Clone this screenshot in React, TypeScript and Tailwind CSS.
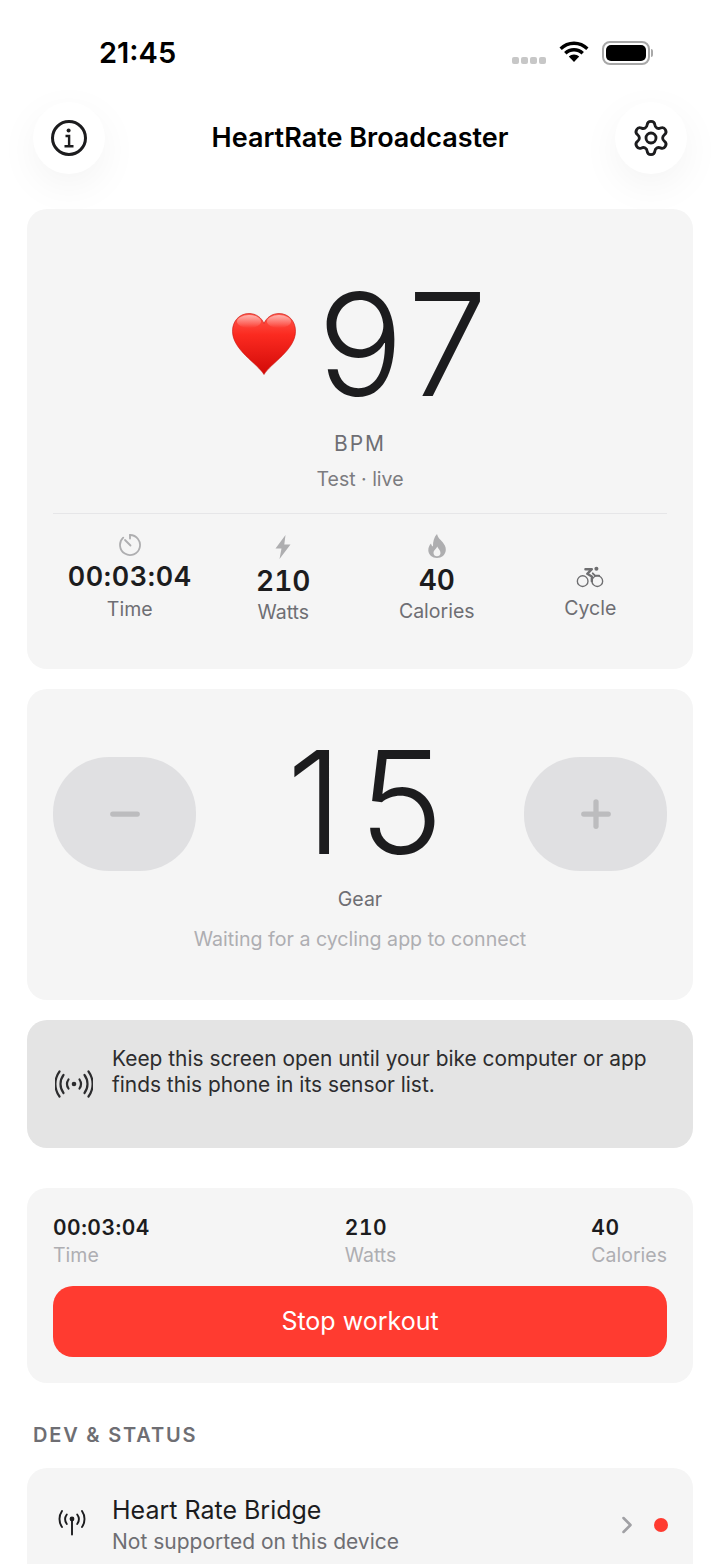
import React from "react";
import { Settings, Minus, Plus, ChevronRight } from "lucide-react";

const Info = () => (
  <svg width="38" height="38" viewBox="0 0 38 38" fill="none" stroke="#1c1c1e" strokeWidth="3" strokeLinecap="round">
    <circle cx="19" cy="19" r="16.5" />
    <circle cx="18.6" cy="11.6" r="2" fill="#1c1c1e" stroke="none" />
    <path d="M15.5 17h3.6v10M14.5 27.2h9" strokeWidth="2.4" strokeLinecap="butt" />
  </svg>
);

const Heart = () => (
  <svg width="64" height="62" viewBox="0 0 64 62" className="shrink-0">
    <defs>
      <linearGradient id="hg" x1="0" y1="0" x2="0" y2="1">
        <stop offset="0" stopColor="#ff5a4e" />
        <stop offset="0.35" stopColor="#fb2a20" />
        <stop offset="1" stopColor="#d20a08" />
      </linearGradient>
      <linearGradient id="hl" x1="0" y1="0" x2="0" y2="1">
        <stop offset="0" stopColor="#ffffff" stopOpacity="0.55" />
        <stop offset="1" stopColor="#ffffff" stopOpacity="0" />
      </linearGradient>
    </defs>
    <path d="M32 61.500C25 50 .8 37 .5 18.500.3 8 7.500 .5 17 .5 24 .5 29.500 4.500 32 10.500 34.500 4.500 40 .5 47 .5 56.500 .5 63.700 8 63.500 18.500 63.200 37 39 50 32 61.500Z" fill="url(#hg)" stroke="#c9100c" strokeWidth="0.6" />
    <ellipse cx="17" cy="8.500" rx="12" ry="6.500" fill="url(#hl)" />
    <ellipse cx="47" cy="8.500" rx="12" ry="6.500" fill="url(#hl)" />
  </svg>
);

const Timer = () => (
  <svg width="24" height="24" viewBox="0 0 24 24" fill="none" stroke="#aeaeb0" strokeWidth="1.8" strokeLinecap="round">
    <path d="M12 2a10 10 0 1 1-6.800 2.700" />
    <path d="M12 2v3.500M7 7l5.500 5.500" />
  </svg>
);

const Bolt = () => (
  <svg width="16" height="24" viewBox="0 0 16 24" fill="#aeaeb0">
    <path d="M10.500 0 .5 13.500h6L4.500 24 15.500 9.500h-6.200Z" />
  </svg>
);

const Flame = () => (
  <svg width="18" height="24" viewBox="0 0 18 24">
    <path fillRule="evenodd" fill="#aeaeb0" d="M9 0c1 4 3 5 5.500 8 2 2.500 3.500 5 3.300 8C17.500 21 13.500 24 9 24S.5 21 .3 16.500C.2 13.500 1.500 11 3 9.500c.3 1.500 1 2.500 2 3C4.800 8 6 3 9 0Zm.2 12.500c-.5 2-3.700 3.500-3.700 6.500 0 2 1.600 3.300 3.500 3.300s3.500-1.300 3.500-3.300c0-3-2.500-4.500-3.300-6.500Z" />
  </svg>
);

const Cycle = () => (
  <svg width="28" height="22" viewBox="0 0 30 24" fill="none" stroke="#6e6e70" strokeWidth="1.500" strokeLinecap="round" strokeLinejoin="round">
    <circle cx="7" cy="16.500" r="5.800" />
    <circle cx="23" cy="16.500" r="5.800" />
    <circle cx="22" cy="3" r="2.200" fill="#6e6e70" stroke="none" />
    <path d="M10 3.500h7l-5 5 5 3v5" strokeWidth="2.600" />
    <path d="M18 8l2.500 2.500H25" strokeWidth="2" />
  </svg>
);

const Waves = () => (
  <svg width="38" height="28" viewBox="0 0 38 28" fill="none" stroke="#2c2c2e" strokeWidth="2.200" strokeLinecap="round" className="shrink-0">
    <circle cx="19" cy="14" r="2.300" fill="#2c2c2e" stroke="none" />
    <path d="M13.500 9.500a8 8 0 0 0 0 9M24.500 9.500a8 8 0 0 1 0 9" />
    <path d="M8.500 5a15 15 0 0 0 0 18M29.500 5a15 15 0 0 1 0 18" />
    <path d="M4.500 1.500a21 21 0 0 0 0 25M33.500 1.500a21 21 0 0 1 0 25" />
  </svg>
);

const Antenna = () => (
  <svg width="30" height="26" viewBox="0 0 30 26" fill="none" stroke="#1c1c1e" strokeWidth="1.900" strokeLinecap="round">
    <circle cx="15" cy="9" r="2.400" fill="#1c1c1e" stroke="none" />
    <path d="M15 10v14.500" />
    <path d="M9.800 4.500a8 8 0 0 0 0 9.500M20.200 4.500a8 8 0 0 1 0 9.500" />
    <path d="M5 1a14 14 0 0 0 0 16M25 1a14 14 0 0 1 0 16" />
  </svg>
);

const Wifi = () => (
  <svg width="32" height="24" viewBox="0 0 32 24" fill="#000">
    <path d="M16 4c4.700 0 9 1.900 12.200 5l2.300-2.500C26.700 2.800 21.600.5 16 .5S5.300 2.800 1.500 6.500L3.800 9C7 5.900 11.300 4 16 4Z" />
    <path d="M16 10.500c2.900 0 5.500 1.100 7.500 3l2.400-2.600C23.300 8.500 19.800 7 16 7S8.700 8.500 6.100 10.900l2.400 2.600c2-1.900 4.600-3 7.500-3Z" />
    <path d="M16 13.500c-2 0-3.800.8-5.200 2L16 21l5.200-5.500c-1.400-1.200-3.200-2-5.200-2Z" />
  </svg>
);

const Battery = () => (
  <div className="flex items-center gap-[1px]">
    <div className="w-[48px] h-[24px] rounded-[8px] border-2 border-[#a8a8a8] p-[2px]">
      <div className="w-full h-full rounded-[5px] bg-black" />
    </div>
    <div className="w-[2px] h-[8px] rounded-r bg-[#a8a8a8]" />
  </div>
);

const Stat = ({ icon, value, label, small, className }: { icon: React.ReactNode; value?: string; label: string; small?: boolean; className?: string }) => (
  <div className={`flex flex-col items-center ${className ?? ""}`}>
    <div className="h-[24px] flex items-center">{icon}</div>
    {value && (
      <div className={`${small ? "text-[27px] leading-[34px] tracking-[0.6px] mt-[3px]" : "text-[28px] leading-[36px] mt-[4px]"} font-semibold text-[#1c1c1e] tabular-nums`}>{value}</div>
    )}
    <div className={`text-[19.5px] leading-[24px] text-[#6e6e73] ${small ? "mt-[3px]" : value ? "mt-[1px]" : "mt-[7px]"}`}>{label}</div>
  </div>
);

const Mini = ({ value, label }: { value: string; label: string }) => (
  <div className="flex flex-col">
    <div className="text-[21px] leading-[26px] tracking-[0.5px] font-semibold text-[#1c1c1e] tabular-nums">{value}</div>
    <div className="text-[19.5px] leading-[26px] mt-[1px] text-[#aeaeb2]">{label}</div>
  </div>
);

const Stepper = ({ children }: { children: React.ReactNode }) => (
  <div className="w-[143px] h-[114px] rounded-[56px] bg-[#e0e0e2] flex items-center justify-center text-[#bcbcbe]">{children}</div>
);

export default function App() {
  return (
    <div className="w-[720px] h-[1564px] overflow-hidden bg-white text-[#1c1c1e] font-['Inter',sans-serif]">
      <div className="h-[102px] flex items-start justify-between pl-[99px] pr-[67px] pt-[35px]">
        <div className="text-[29px] leading-[36px] font-semibold text-black">21:45</div>
        <div className="flex items-center gap-[12px] pt-[6px]">
          <div className="flex gap-[2px] items-center mt-[14px]">
            <span className="w-[7px] h-[7px] rounded-[2px] bg-[#c7c7c7]" />
            <span className="w-[7px] h-[7px] rounded-[2px] bg-[#c7c7c7]" />
            <span className="w-[7px] h-[7px] rounded-[2px] bg-[#c7c7c7]" />
            <span className="w-[7px] h-[7px] rounded-[2px] bg-[#c7c7c7]" />
          </div>
          <Wifi />
          <Battery />
        </div>
      </div>

      <div className="flex items-center justify-between px-[33px] h-[72px]">
        <div className="w-[72px] h-[72px] rounded-full bg-white shadow-[0_12px_40px_rgba(0,0,0,0.05)] flex items-center justify-center"><Info /></div>
        <div className="text-[27px] font-semibold text-black">HeartRate Broadcaster</div>
        <div className="w-[72px] h-[72px] rounded-full bg-white shadow-[0_12px_40px_rgba(0,0,0,0.05)] flex items-center justify-center">
          <Settings size={40} strokeWidth={1.7} color="#1c1c1e" />
        </div>
      </div>

      <div className="mt-[35px] mx-[27px] flex flex-col">
        <section className="h-[460px] rounded-[20px] bg-[#f5f5f5] px-[26px] flex flex-col items-center">
          <div className="h-[174px] mt-[48px] flex items-center">
            <Heart />
            <div className="ml-[21px] -mr-[7px] text-[143px] leading-[174px] font-[350] tracking-[7px] text-[#1c1c1e]">97</div>
          </div>
          <div className="-mt-[1px] text-[21px] leading-[28px] tracking-[2px] text-[#6e6e73]">BPM</div>
          <div className="mt-[8px] text-[19.5px] leading-[26px] text-[#7c7c80]">Test · live</div>
          <div className="mt-[21px] w-full border-t border-[#e6e6e8]" />
          <div className="mt-[19px] w-full grid grid-cols-4">
            <Stat icon={<Timer />} value="00:03:04" label="Time" small />
            <Stat icon={<Bolt />} value="210" label="Watts" className="mt-[2px]" />
            <Stat icon={<Flame />} value="40" label="Calories" className="mt-[1px]" />
            <Stat icon={<Cycle />} label="Cycle" className="mt-[32px]" />
          </div>
        </section>

        <section className="mt-[20px] h-[311px] rounded-[20px] bg-[#f5f5f5] px-[26px] flex flex-col items-center">
          <div className="w-full flex items-center justify-between mt-[45px] h-[160px]">
            <Stepper><Minus size={42} strokeWidth={3} /></Stepper>
            <div className="text-[143px] leading-[160px] font-[350] tracking-[16px] -mr-[26px] pb-[24px] text-[#1c1c1e]">15</div>
            <Stepper><Plus size={42} strokeWidth={3} /></Stepper>
          </div>
          <div className="-mt-[8px] text-[19.5px] leading-[26px] text-[#6e6e73]">Gear</div>
          <div className="mt-[14px] text-[19.6px] leading-[26px] text-[#aeaeb2]">Waiting for a cycling app to connect</div>
        </section>

        <section className="mt-[20px] h-[128px] rounded-[20px] bg-[#e4e4e4] pl-[28px] pr-[26px] flex items-center gap-[19px]">
          <Waves />
          <div className="text-[20.9px] leading-[26px] text-[#2c2c2e] -mt-[24px]">Keep this screen open until your bike computer or app finds this phone in its sensor list.</div>
        </section>

        <section className="mt-[40px] h-[195px] rounded-[20px] bg-[#f5f5f5] px-[26px] pt-[27px]">
          <div className="flex justify-between">
            <Mini value="00:03:04" label="Time" />
            <Mini value="210" label="Watts" />
            <Mini value="40" label="Calories" />
          </div>
          <div className="mt-[18px] h-[71px] rounded-[20px] bg-[#ff3b30] text-white flex items-center justify-center text-[25px]">Stop workout</div>
        </section>

        <div className="mt-[39px] ml-[6px] text-[20px] leading-[26px] font-semibold tracking-[1.8px] text-[#6e6e73]">DEV &amp; STATUS</div>

        <section className="mt-[20px] h-[120px] rounded-[20px] bg-[#f5f5f5] pl-[30px] pr-[25px] pt-[26px] flex items-start">
          <div className="mt-[16px] mr-[25px]"><Antenna /></div>
          <div className="flex-1">
            <div className="text-[25px] leading-[32px] text-[#1c1c1e]">Heart Rate Bridge</div>
            <div className="text-[21px] leading-[31px] text-[#6e6e73]">Not supported on this device</div>
          </div>
          <div className="flex items-center mt-[17px] gap-[13px]">
            <ChevronRight size={28} color="#a0a0a4" strokeWidth={2.2} />
            <span className="w-[14px] h-[14px] rounded-full bg-[#ff3b30]" />
          </div>
        </section>
      </div>
    </div>
  );
}
